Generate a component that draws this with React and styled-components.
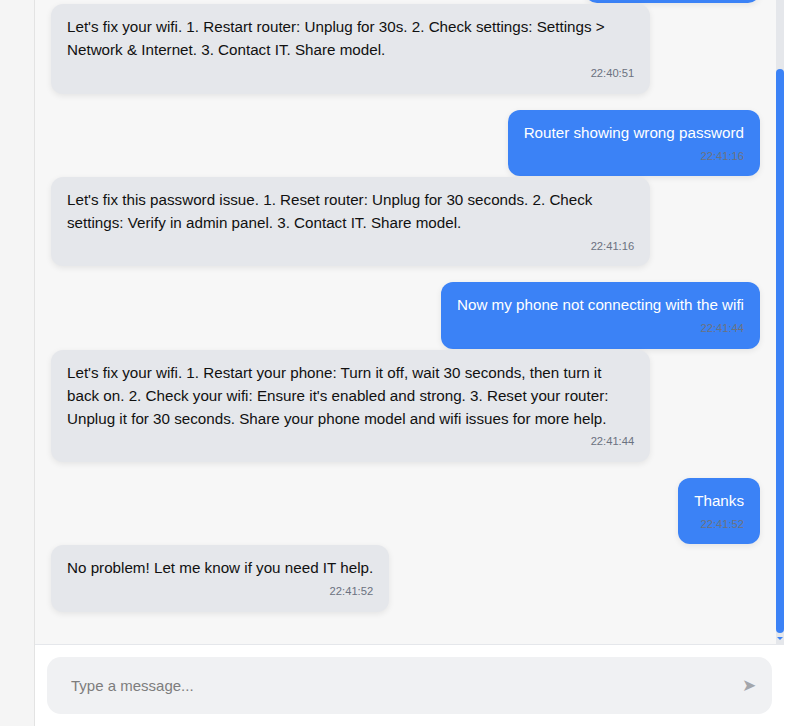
import React, { useLayoutEffect, useRef, useState } from 'react'
import styled, { createGlobalStyle } from 'styled-components'

const GlobalStyle = createGlobalStyle`
  html, body {
    margin: 0;
    padding: 0;
    height: 100%;
    background: #ffffff;
    font-family: "Liberation Sans", Arial, sans-serif;
  }
  #root {
    height: 100%;
  }
`

const Shell = styled.div`
  display: flex;
  height: 100vh;
  background: #ffffff;
`

const Rail = styled.aside`
  width: 34px;
  flex-shrink: 0;
  background: #f5f5f5;
  border-right: 1px solid #e3e3e3;
`

const Chat = styled.main`
  width: 749px;
  display: flex;
  flex-direction: column;
  min-height: 0;
`

const Viewport = styled.div`
  flex: 1;
  min-height: 0;
  display: flex;
  background: #f7f7f7;
`

const Messages = styled.div`
  flex: 1;
  min-width: 0;
  overflow-y: auto;
  padding: 16px;
  display: flex;
  flex-direction: column;
  scrollbar-width: none;

  &::-webkit-scrollbar {
    display: none;
  }
`

// custom scrollbar drawn next to the list
const Track = styled.div`
  width: 8px;
  flex-shrink: 0;
  display: flex;
  flex-direction: column;
  background: #e5e7eb;
`

const ThumbRail = styled.div`
  flex: 1;
  min-height: 0;
`

const Thumb = styled.div`
  width: 100%;
  border-radius: 4px;
  background: #3b82f6;
`

const StepDown = styled.div`
  height: 11px;
  display: flex;
  align-items: center;
  justify-content: center;

  &::after {
    content: '';
    border-left: 3px solid transparent;
    border-right: 3px solid transparent;
    border-top: 3px solid #3b82f6;
  }
`

const Bubble = styled.div`
  align-self: ${p => (p.$user ? 'flex-end' : 'flex-start')};
  max-width: 80%;
  padding: 12px 16px;
  margin-bottom: ${p => (p.$user ? '1px' : '16px')};
  border-radius: 12px;
  background: ${p => (p.$user ? '#3b82f6' : '#e5e7eb')};
  color: ${p => (p.$user ? '#ffffff' : '#111111')};
  box-shadow: 0 2px 6px rgba(0, 0, 0, 0.08);
  font-size: 15.2px;
  line-height: 1.5;
`

const Time = styled.div`
  margin-top: 4px;
  text-align: right;
  font-size: 11.2px;
  line-height: 1.4;
  color: #6b7280;
`

const Composer = styled.form`
  flex-shrink: 0;
  padding: 12px;
  background: #ffffff;
  border-top: 1px solid #e5e7eb;
`

const Field = styled.div`
  display: flex;
  align-items: center;
  height: 57px;
  padding: 0 14px 0 24px;
  border-radius: 14px;
  background: #f0f1f3;
`

const Input = styled.input`
  flex: 1;
  border: none;
  outline: none;
  background: transparent;
  font-family: inherit;
  font-size: 15px;
  color: #111111;
  padding: 0;

  &::placeholder {
    color: #7d7d7d;
  }
`

const Send = styled.button`
  border: none;
  background: transparent;
  padding: 0 2px;
  font-size: 17px;
  color: #a3a6ab;
  cursor: pointer;
`

const messages = [
  { user: true, text: 'My wifi is not working', time: '22:40:51' },
  {
    user: false,
    text: "Let's fix your wifi. 1. Restart router: Unplug for 30s. 2. Check settings: Settings > Network & Internet. 3. Contact IT. Share model.",
    time: '22:40:51',
  },
  { user: true, text: 'Router showing wrong password', time: '22:41:16' },
  {
    user: false,
    text: "Let's fix this password issue. 1. Reset router: Unplug for 30 seconds. 2. Check settings: Verify in admin panel. 3. Contact IT. Share model.",
    time: '22:41:16',
  },
  { user: true, text: 'Now my phone not connecting with the wifi', time: '22:41:44' },
  {
    user: false,
    text: "Let's fix your wifi. 1. Restart your phone: Turn it off, wait 30 seconds, then turn it back on. 2. Check your wifi: Ensure it's enabled and strong. 3. Reset your router: Unplug it for 30 seconds. Share your phone model and wifi issues for more help.",
    time: '22:41:44',
  },
  { user: true, text: 'Thanks', time: '22:41:52' },
  { user: false, text: 'No problem! Let me know if you need IT help.', time: '22:41:52' },
]

export default function App() {
  const listRef = useRef(null)
  const railRef = useRef(null)
  const [thumb, setThumb] = useState({ top: 0, height: 0 })

  const measure = () => {
    const el = listRef.current
    const rail = railRef.current
    if (!el || !rail) return
    const len = rail.clientHeight
    setThumb({
      top: (el.scrollTop / el.scrollHeight) * len,
      height: (el.clientHeight / el.scrollHeight) * len,
    })
  }

  useLayoutEffect(() => {
    const el = listRef.current
    if (el) el.scrollTop = el.scrollHeight
    measure()
  }, [])

  return (
    <>
      <GlobalStyle />
      <Shell>
        <Rail />
        <Chat>
          <Viewport>
            <Messages ref={listRef} onScroll={measure}>
              {messages.map((m, i) => (
                <Bubble key={i} $user={m.user}>
                  {m.text}
                  <Time>{m.time}</Time>
                </Bubble>
              ))}
            </Messages>
            <Track>
              <ThumbRail ref={railRef}>
                <Thumb style={{ marginTop: thumb.top, height: thumb.height }} />
              </ThumbRail>
              <StepDown />
            </Track>
          </Viewport>
          <Composer onSubmit={e => e.preventDefault()}>
            <Field>
              <Input placeholder="Type a message..." autoFocus />
              <Send type="submit">➤</Send>
            </Field>
          </Composer>
        </Chat>
      </Shell>
    </>
  )
}
